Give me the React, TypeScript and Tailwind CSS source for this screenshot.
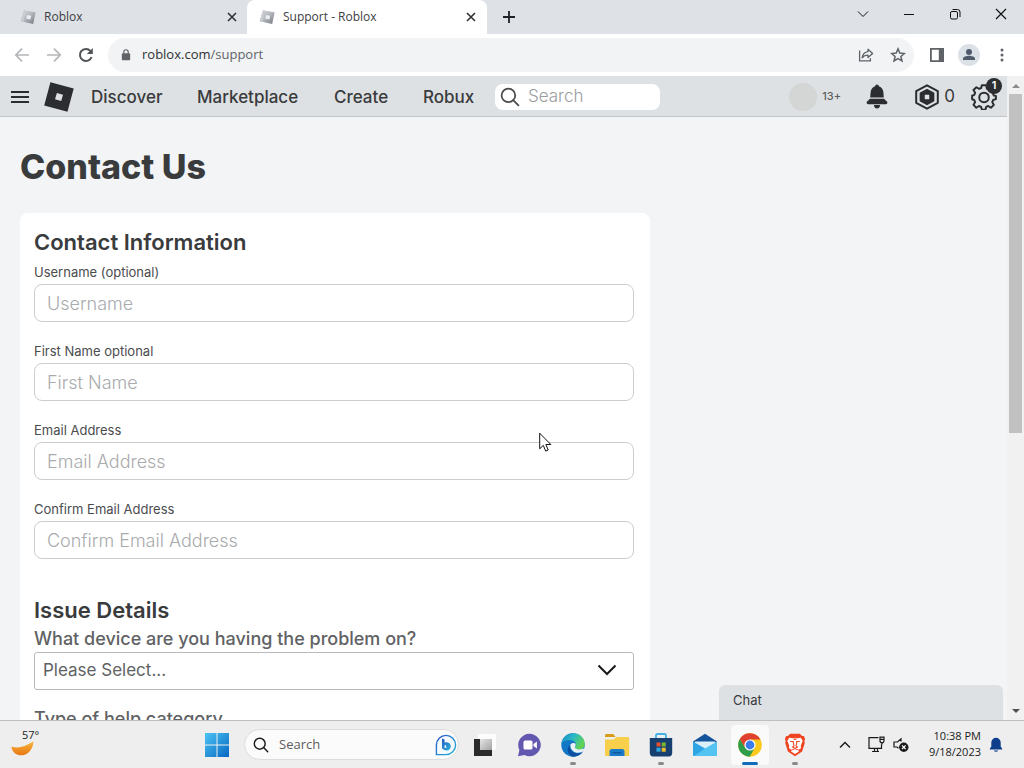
import React, { useState } from 'react';

interface IconProps {
  className?: string;
}

interface BrowserTab {
  title: string;
  active: boolean;
}

interface ContactField {
  id: string;
  label: string;
  placeholder: string;
  type: string;
}

const TABS: BrowserTab[] = [
  { title: 'Roblox', active: false },
  { title: 'Support - Roblox', active: true },
];

const FIELDS: ContactField[] = [
  { id: 'username', label: 'Username (optional)', placeholder: 'Username', type: 'text' },
  { id: 'first-name', label: 'First Name optional', placeholder: 'First Name', type: 'text' },
  { id: 'email', label: 'Email Address', placeholder: 'Email Address', type: 'email' },
  { id: 'confirm-email', label: 'Confirm Email Address', placeholder: 'Confirm Email Address', type: 'email' },
];

/* ---------- Browser icons ---------- */

const FaviconIcon: React.FC<IconProps> = ({ className }) => (
  <svg className={className} viewBox="0 0 16 16" aria-hidden="true">
    <defs>
      <linearGradient id="favicon" x1="0" y1="0" x2="1" y2="1">
        <stop offset="0" stopColor="#d9dbdf" />
        <stop offset="0.5" stopColor="#b3b6bd" />
        <stop offset="1" stopColor="#74777f" />
      </linearGradient>
    </defs>
    <path d="M4 1.2 15.6 3.2 13.2 15 .6 12.2Z" fill="url(#favicon)" />
    <path d="M4 1.2.6 12.2 3.4 12.8 6 1.6Z" fill="#c9ccd2" />
    <path d="M7.2 6 11.2 6.8 10.3 10.4 6.2 9.6Z" fill="#eceef1" />
  </svg>
);

const CloseIcon: React.FC<IconProps> = ({ className }) => (
  <svg className={className} viewBox="0 0 12 12" fill="none" stroke="currentColor" strokeWidth="1.6" aria-hidden="true">
    <path d="m2 2 8 8M10 2l-8 8" />
  </svg>
);

const ArrowIcon: React.FC<IconProps> = ({ className }) => (
  <svg className={className} viewBox="0 0 16 16" fill="none" stroke="currentColor" strokeWidth="1.7" aria-hidden="true">
    <path d="M15 8H2M8 1.6 1.8 8 8 14.4" />
  </svg>
);

const ReloadIcon: React.FC<IconProps> = ({ className }) => (
  <svg className={className} viewBox="0 0 16 16" aria-hidden="true">
    <path d="M13.6 10A6 6 0 1 1 12.4 3.9" fill="none" stroke="currentColor" strokeWidth="2" />
    <path d="M14.8 1v6H8.8Z" fill="currentColor" />
  </svg>
);

const LockIcon: React.FC<IconProps> = ({ className }) => (
  <svg className={className} viewBox="0 0 10 13" aria-hidden="true">
    <rect x="0.5" y="4.6" width="9" height="7.6" rx="1" fill="currentColor" />
    <path d="M2.6 5V3.2a2.4 2.4 0 0 1 4.8 0V5" fill="none" stroke="currentColor" strokeWidth="1.3" />
  </svg>
);

const ShareIcon: React.FC<IconProps> = ({ className }) => (
  <svg className={className} viewBox="0 0 16 16" fill="none" stroke="currentColor" strokeWidth="1.3" aria-hidden="true">
    <path d="M1.6 3.6v10.2h10.8v-2.6" />
    <path d="M10 2.2 14.6 6.4 10 10.6V8.2C7.4 8.2 5.6 9 4.2 10.8 4.6 7.6 6.4 5 10 4.6Z" strokeLinejoin="round" />
  </svg>
);

const StarIcon: React.FC<IconProps> = ({ className }) => (
  <svg className={className} viewBox="0 0 16 16" fill="none" stroke="currentColor" strokeWidth="1.5" aria-hidden="true">
    <path d="m8 1.9 1.8 4.2 4.6.4-3.5 3 1.1 4.5L8 11.6 4 14l1.1-4.5-3.5-3 4.6-.4Z" />
  </svg>
);

const SidePanelIcon: React.FC<IconProps> = ({ className }) => (
  <svg className={className} viewBox="0 0 14 14" aria-hidden="true">
    <path fill="currentColor" fillRule="evenodd" d="M0 0h14v14H0ZM1.8 1.8v10.4h7V1.8Z" />
  </svg>
);

const ProfileIcon: React.FC<IconProps> = ({ className }) => (
  <svg className={className} viewBox="0 0 22 22" aria-hidden="true">
    <circle cx="11" cy="11" r="11" fill="#dce0e7" />
    <circle cx="11" cy="8" r="3" fill="#4f5b6b" />
    <path d="M5 16v-1.4c0-2 3.6-2.9 6-2.9s6 .9 6 2.9V16Z" fill="#4f5b6b" />
  </svg>
);

/* ---------- Site icons ---------- */

const RobloxLogo: React.FC<IconProps> = ({ className }) => (
  <svg className={className} viewBox="0 0 30 30" aria-hidden="true">
    <path fill="#2b2d30" fillRule="evenodd" d="M6.4.2 29.7 6.4 23.5 29.8.2 23.5ZM12.9 10.9 11 17.3 17.2 19 19 12.7Z" />
  </svg>
);

const SearchIcon: React.FC<IconProps> = ({ className }) => (
  <svg className={className} viewBox="0 0 20 20" fill="none" stroke="currentColor" strokeWidth="1.8" aria-hidden="true">
    <circle cx="8.4" cy="8.4" r="6.8" />
    <path d="m13.2 13.2 5.2 5.2" strokeLinecap="round" />
  </svg>
);

const BellIcon: React.FC<IconProps> = ({ className }) => (
  <svg className={className} viewBox="0 0 22 25" fill="#2b2d30" aria-hidden="true">
    <path d="M11 .5a1.9 1.9 0 0 1 1.9 1.7c2.9.9 4.4 3.4 4.5 6.4l.4 5H4.2l.4-5c.1-3 1.6-5.5 4.500-6.400A1.900 1.900 0 0 1 11 .5Z" />
    <path d="M3.800 14.800h14.400c.6 1.600 3.200 2.300 3.200 3.800 0 .9-.7 1.600-1.600 1.600H2.200c-.9 0-1.600-.7-1.600-1.600 0-1.500 2.600-2.200 3.200-3.800Z" />
    <path d="M8 21h6a3 3.400 0 0 1-6 0Z" />
  </svg>
);

const RobuxIcon: React.FC<IconProps> = ({ className }) => (
  <svg className={className} viewBox="0 0 26 26" aria-hidden="true">
    <path d="M13 1.300 23.800 7.200v11.600L13 24.700 2.200 18.800V7.200Z" fill="none" stroke="#2b2d30" strokeWidth="2" strokeLinejoin="round" />
    <path fill="#2b2d30" stroke="#2b2d30" strokeWidth="1.500" strokeLinejoin="round" fillRule="evenodd" d="M13 5.600 19.600 9.200v7.600L13 20.400 6.400 16.800V9.200ZM10 10v6h6v-6Z" />
  </svg>
);

const GearIcon: React.FC<IconProps> = ({ className }) => (
  <svg className={className} viewBox="0 0 24 24" fill="none" stroke="#2b2d30" strokeWidth="1.800" strokeLinejoin="round" aria-hidden="true">
    <path d="M10 1.200h4l.6 3 1.900.8 2.600-1.700 2.800 2.800-1.700 2.500.8 2 2 .4v3l-2.600.8-.8 1.900 1.500 2.600-2.700 2.600-2.500-1.600-1.900.8-.7 2.700h-3.200l-.8-2.700-1.900-.8-2.500 1.600-2.600-2.600 1.500-2.600-.8-1.900-2-.7v-3.400l2-.6.8-2-1.500-2.500 2.700-2.600 2.500 1.500 1.900-.8Z" />
    <circle cx="12" cy="12.400" r="4.400" />
  </svg>
);

const CursorIcon: React.FC<IconProps> = ({ className }) => (
  <svg className={className} viewBox="0 0 13 20" aria-hidden="true">
    <path d="M.7 1.200v15.600l3.600-3.400 2.400 5.700 2.500-1.100-2.300-5.500h4.900Z" fill="#fff" stroke="#111" strokeWidth="1" />
  </svg>
);

/* ---------- Taskbar icons ---------- */

const WeatherIcon: React.FC<IconProps> = ({ className }) => (
  <svg className={className} viewBox="0 0 24 15" aria-hidden="true">
    <defs>
      <linearGradient id="moon" x1="0" y1="0" x2="0" y2="1">
        <stop offset="0" stopColor="#f8b63c" />
        <stop offset="1" stopColor="#e87512" />
      </linearGradient>
    </defs>
    <path d="M.4 5.500C7 8 13 6 22.500.6 22 8.500 17 14.300 10.500 14.300 5 14.300 1 11 .4 5.500Z" fill="url(#moon)" />
  </svg>
);

const WindowsIcon: React.FC<IconProps> = ({ className }) => (
  <svg className={className} viewBox="0 0 24 24" aria-hidden="true">
    <defs>
      <linearGradient id="windows" x1="0" y1="0" x2="24" y2="24" gradientUnits="userSpaceOnUse">
        <stop offset="0" stopColor="#4cc4f5" />
        <stop offset="1" stopColor="#0667c1" />
      </linearGradient>
    </defs>
    <path d="M0 0h11.500v11.500H0ZM12.500 0H24v11.500H12.500ZM0 12.500h11.500V24H0ZM12.500 12.500H24V24H12.500Z" fill="url(#windows)" />
  </svg>
);

const BingIcon: React.FC<IconProps> = ({ className }) => (
  <svg className={className} viewBox="0 0 22 22" aria-hidden="true">
    <defs>
      <linearGradient id="bing" x1="0" y1="0" x2="1" y2="1">
        <stop offset="0" stopColor="#2558c9" />
        <stop offset="1" stopColor="#29b3d8" />
      </linearGradient>
    </defs>
    <path d="M1.400 20.600V11A9.600 9.600 0 1 1 11 20.600Z" fill="#f4fafd" stroke="url(#bing)" strokeWidth="1.400" />
    <path d="M7 4.500 9.600 5.400v3.200l2.400-.4c2.200.2 3.800 1.800 3.800 4 0 2.400-1.800 4.200-4 4.200L9.400 16 7 14.600ZM9.600 11v3.200l2.600-1.200-1.200-.6-.6-1.600Z" fill="url(#bing)" />
  </svg>
);

const TaskViewIcon: React.FC<IconProps> = ({ className }) => (
  <svg className={className} viewBox="0 0 24 24" aria-hidden="true">
    <defs>
      <linearGradient id="task-view" x1="0" y1="0" x2="1" y2="1">
        <stop offset="0" stopColor="#e6e6e6" />
        <stop offset="1" stopColor="#a2a2a2" />
      </linearGradient>
    </defs>
    <rect x="5" y="1" width="18" height="16" rx="1.500" fill="#fcfcfc" />
    <path d="M1 6h18v17H1Z" fill="#2a2a2a" />
    <path d="M7 6h12v11H7Z" fill="url(#task-view)" />
  </svg>
);

const TeamsIcon: React.FC<IconProps> = ({ className }) => (
  <svg className={className} viewBox="0 0 24 24" aria-hidden="true">
    <path d="M12.500.8A11.200 11.200 0 1 1 7.500 22L1 23.200 2.400 17A11.200 11.200 0 0 1 12.500.8Z" fill="#6358b0" />
    <rect x="6.500" y="7.500" width="9" height="9" rx="1.500" fill="#fff" />
    <path d="m16.500 11 3.400-2.600v7.200L16.500 13Z" fill="#fff" />
  </svg>
);

const EdgeIcon: React.FC<IconProps> = ({ className }) => (
  <svg className={className} viewBox="0 0 24 24" aria-hidden="true">
    <defs>
      <linearGradient id="edge-top" x1="0" y1="0" x2="1" y2="0.500">
        <stop offset="0" stopColor="#1687c9" />
        <stop offset="0.500" stopColor="#2bb8c5" />
        <stop offset="1" stopColor="#63d452" />
      </linearGradient>
    </defs>
    <circle cx="12" cy="12" r="11.700" fill="#1377c8" />
    <path d="M.4 11C1 5 6 .3 12 .3c7 0 11.700 5 11.700 10.400 0 4-3 6-6.200 6-3 0-4.300-1.400-3.600-2.600.5-.7 1-1.400 1-2.700C14.900 8.500 11.500 7 8.400 7 4.800 7 1.800 8.600.4 11Z" fill="url(#edge-top)" />
    <path d="M9 11.800c-1 4.700 3 9 8 8.600 2.200-.2 3.800-1 5-1.900C20 21.700 16.500 23.700 12 23.700c-5-1-7.500-8.500-3-11.900Z" fill="#0d4f9e" />
    <path d="M9.500 11.500c1-1.400 3.500-2 5-.8.800 1.600-.9 3-.6 3.900.5 1.800 4.500 2.800 8.400.8l1 .3c-.5 2-1.200 2.600-2.300 3.400-5.500 2.400-12.500-1.200-11.500-7.600Z" fill="#e8f2f6" />
  </svg>
);

const FolderIcon: React.FC<IconProps> = ({ className }) => (
  <svg className={className} viewBox="0 0 26 24" aria-hidden="true">
    <path d="M1 2.500C1 1.700 1.600 1 2.500 1h6.800l2.300 3H1Z" fill="#d99a17" />
    <path d="M1 6.500h8.500L12.500 4H24c.7 0 1.200.5 1.200 1.200V22c0 .6-.5 1-1 1H2c-.6 0-1-.4-1-1Z" fill="#f8cf4a" />
    <path d="M5.500 23v-4.500c0-1.700 1-2.500 2.500-2.500h10c1.500 0 2.500.8 2.500 2.500V23Z" fill="#1a7bcb" />
    <path d="M8.500 19h9v1.500h-9Z" fill="#10589e" />
  </svg>
);

const StoreIcon: React.FC<IconProps> = ({ className }) => (
  <svg className={className} viewBox="0 0 24 24" aria-hidden="true">
    <path d="M7 6V2.500C7 1.700 7.600 1 8.500 1h7c.9 0 1.500.7 1.500 1.500V6" fill="none" stroke="#42b1e6" strokeWidth="1.800" />
    <path d="M.8 5h22.400v15c0 2-1.200 3.400-3.200 3.400H4C2 23.400.8 22 .8 20Z" fill="#173f70" />
    <path d="M7.500 9.500h4v4h-4Z" fill="#e8502c" />
    <path d="M12.700 9.500h4v4h-4Z" fill="#7cb82f" />
    <path d="M7.500 14.700h4v4h-4Z" fill="#31a8e0" />
    <path d="M12.700 14.700h4v4h-4Z" fill="#f5bc2d" />
  </svg>
);

const MailIcon: React.FC<IconProps> = ({ className }) => (
  <svg className={className} viewBox="0 0 26 24" aria-hidden="true">
    <path d="M1 8.500 13 .8l12 7.700-12 8Z" fill="#15549a" />
    <path d="M3 8.500h20v5L13 19 3 13.500Z" fill="#d9effa" />
    <path d="M1 8.500V22c0 .6.4 1 1 1h22L13 15.500Z" fill="#2fa4e3" />
    <path d="M25 8.500V22c0 .6-.4 1-1 1H2l11-7.500Z" fill="#53c3f1" />
  </svg>
);

const ChromeIcon: React.FC<IconProps> = ({ className }) => (
  <svg className={className} viewBox="0 0 24 24" aria-hidden="true">
    <circle cx="12" cy="12" r="11.800" fill="#fbc91c" />
    <path d="M1.800 6 7.200 14.800 12 17l4.800-2.200-5.100 9A11.800 11.800 0 0 1 1.800 6Z" fill="#2f9e4b" />
    <path d="M12 6.400h10.400A11.800 11.800 0 0 0 1.800 6l5.400 8.800L12 12Z" fill="#e0402f" />
    <circle cx="12" cy="12" r="5.600" fill="#fff" />
    <circle cx="12" cy="12" r="4.400" fill="#3b7de8" />
  </svg>
);

const BraveIcon: React.FC<IconProps> = ({ className }) => (
  <svg className={className} viewBox="0 0 22 25" aria-hidden="true">
    <path d="M6 .8h10l2.400 2.400 1.800-.2 1.300 3.200-.8 2.300.5 2-2.800 8.800L11 24.300 3.600 19.300.8 10.500l.5-2L.5 6.200 1.800 3l1.800.2Z" fill="#ee4422" />
    <path d="m5 5 3.500.5L11 5l2.500.5L17 5l2 3.200-2 5 .3 2.600-3.300 1.800 1.400 1.400L11 21.800 6.600 19 8 17.600l-3.300-1.800.3-2.600-2-5Z" fill="#fff" />
    <path d="M6 8.800h3.200v1.400l.8 3.200-1.600 1.200 2.600 1.600 2.600-1.600-1.600-1.200.8-3.200V8.800H16M9.400 6l1.600.6 1.600-.6M8 17.600l3-1.400 3 1.400" fill="none" stroke="#ee4422" strokeWidth="1.100" />
  </svg>
);

const NetworkIcon: React.FC<IconProps> = ({ className }) => (
  <svg className={className} viewBox="0 0 17 17" fill="none" stroke="currentColor" strokeWidth="1.200" aria-hidden="true">
    <path d="M10.500 1.600H1v10.800h12.500V8.500M4 15.500h7M6.500 12.500v3M9.500 12.500v3M14 6.500v2" />
    <path d="M12 1.200h4v3.600a2 2 0 0 1-4 0ZM12 3.400h4" />
  </svg>
);

const MutedIcon: React.FC<IconProps> = ({ className }) => (
  <svg className={className} viewBox="0 0 16 16" aria-hidden="true">
    <path d="M8 4.500V1.800L4.500 5H1v5h3l1.500 1.300" fill="none" stroke="currentColor" strokeWidth="1.200" />
    <circle cx="10.800" cy="10.200" r="4.700" fill="currentColor" />
    <path d="m9 8.400 3.600 3.600M12.600 8.400 9 12" stroke="#fff" strokeWidth="1.200" />
  </svg>
);

const TrayBellIcon: React.FC<IconProps> = ({ className }) => (
  <svg className={className} viewBox="0 0 14 16" fill="#0f3f8c" aria-hidden="true">
    <path d="M7 .8a4.700 4.700 0 0 1 4.700 4.700v4l1.500 2.300v.8H.8v-.8l1.500-2.300v-4A4.700 4.700 0 0 1 7 .8ZM4.800 13.400h4.400a2.300 2 0 0 1-4.400 0Z" />
  </svg>
);

const TASKBAR_APPS = [
  { name: 'Task view', Icon: TaskViewIcon, running: false, active: false },
  { name: 'Microsoft Teams', Icon: TeamsIcon, running: false, active: false },
  { name: 'Microsoft Edge', Icon: EdgeIcon, running: true, active: false },
  { name: 'File Explorer', Icon: FolderIcon, running: false, active: false },
  { name: 'Microsoft Store', Icon: StoreIcon, running: true, active: false },
  { name: 'Mail', Icon: MailIcon, running: false, active: false },
  { name: 'Google Chrome', Icon: ChromeIcon, running: true, active: true },
  { name: 'Brave', Icon: BraveIcon, running: true, active: false },
];

/**
 * Tab strip with the window controls
 */
const TabStrip: React.FC = () => (
  <div className="flex h-[34px] shrink-0 bg-[#dee1e6] text-[#3c4043]">
    {TABS.map((tab) => (
      <div
        key={tab.title}
        className={
          tab.active
            ? 'flex w-60 items-center rounded-t-lg bg-white pr-2 pl-3'
            : 'flex w-[247px] items-center pr-[7px] pl-5'
        }
      >
        <FaviconIcon className="h-4 w-4" />
        <span className="ml-2 flex-1 truncate text-xs">{tab.title}</span>
        <button type="button" aria-label={`Close ${tab.title}`} className="flex h-4 w-4 items-center justify-center text-[#303134]">
          <CloseIcon className="h-3 w-3" />
        </button>
      </div>
    ))}
    <button type="button" aria-label="New tab" className="flex w-11 items-center justify-center text-[#202124]">
      <svg className="h-3 w-3" viewBox="0 0 12 12" stroke="currentColor" strokeWidth="1.800" aria-hidden="true">
        <path d="M6 0v12M0 6h12" />
      </svg>
    </button>
    <div className="ml-auto flex h-7 text-[#111]">
      <button type="button" aria-label="Search tabs" className="flex w-[46px] items-center justify-center">
        <svg className="h-3 w-3" viewBox="0 0 12 12" fill="none" stroke="currentColor" aria-hidden="true">
          <path d="m1 3.500 5 5 5-5" />
        </svg>
      </button>
      <button type="button" aria-label="Minimize" className="flex w-[46px] items-center justify-center">
        <svg className="h-3 w-3" viewBox="0 0 12 12" stroke="currentColor" aria-hidden="true">
          <path d="M1 6.500h10" />
        </svg>
      </button>
      <button type="button" aria-label="Restore" className="flex w-[46px] items-center justify-center">
        <svg className="h-3 w-3" viewBox="0 0 12 12" fill="none" stroke="currentColor" aria-hidden="true">
          <rect x="1.500" y="3.500" width="7" height="7.500" rx="1.500" />
          <path d="M3.500 1.500h5a2.500 2.500 0 0 1 2.500 2.500v5" />
        </svg>
      </button>
      <button type="button" aria-label="Close window" className="flex w-[46px] items-center justify-center">
        <svg className="h-3 w-3" viewBox="0 0 12 12" stroke="currentColor" strokeWidth="1.200" aria-hidden="true">
          <path d="m1 1 10 10M11 1 1 11" />
        </svg>
      </button>
    </div>
  </div>
);

/**
 * Back / forward / reload row with the address field
 */
const AddressBar: React.FC = () => (
  <div className="flex h-[42px] shrink-0 items-center bg-white pr-3.5 pl-2 text-[#5f6368]">
    <button type="button" aria-label="Back" className="flex w-7 justify-center text-[#b4b6b9]">
      <ArrowIcon className="h-4 w-4" />
    </button>
    <button type="button" aria-label="Forward" className="ml-1 flex w-7 justify-center text-[#b4b6b9]">
      <ArrowIcon className="h-4 w-4 rotate-180" />
    </button>
    <button type="button" aria-label="Reload" className="ml-1 flex w-7 justify-center text-[#505356]">
      <ReloadIcon className="h-4 w-4" />
    </button>
    <div className="ml-2 flex h-[34px] flex-1 items-center rounded-full bg-[#f1f3f4] pr-2 pl-3">
      <LockIcon className="h-3 w-3" />
      <a href="#support" className="ml-2.5 text-[13px]">
        <span className="text-[#303134]">roblox.com</span>/support
      </a>
      <button type="button" aria-label="Share this page" className="ml-auto">
        <ShareIcon className="h-4 w-4" />
      </button>
      <button type="button" aria-label="Bookmark this tab" className="ml-4">
        <StarIcon className="h-4 w-4" />
      </button>
    </div>
    <button type="button" aria-label="Side panel" className="ml-4">
      <SidePanelIcon className="h-3.5 w-3.5" />
    </button>
    <button type="button" aria-label="Profile" className="ml-3.5">
      <ProfileIcon className="h-[22px] w-[22px]" />
    </button>
    <button type="button" aria-label="Menu" className="ml-3.5">
      <svg className="h-4 w-4" viewBox="0 0 16 16" fill="currentColor" aria-hidden="true">
        <circle cx="8" cy="3" r="1.500" />
        <circle cx="8" cy="8" r="1.500" />
        <circle cx="8" cy="13" r="1.500" />
      </svg>
    </button>
  </div>
);

/**
 * Roblox header
 */
const SiteHeader: React.FC = () => (
  <header className="flex h-[41px] shrink-0 items-center border-b border-[#c3c6c9] bg-[#dee1e3] pt-px pr-2.5 pl-[11px] font-[Inter,sans-serif] text-[#393b3d]">
    <button type="button" aria-label="Open navigation">
      <svg className="h-[18px] w-[18px]" viewBox="0 0 18 18" stroke="#2b2d30" strokeWidth="2" aria-hidden="true">
        <path d="M0 4h18M0 9h18M0 14h18" />
      </svg>
    </button>
    <a href="#home" aria-label="Roblox" className="ml-[15px]">
      <RobloxLogo className="h-[30px] w-[30px]" />
    </a>
    <nav className="ml-[17px] grid grid-cols-[106px_137px_89px_72px] pt-0.5 text-[17px] font-medium">
      <a href="#discover">Discover</a>
      <a href="#marketplace">Marketplace</a>
      <a href="#create">Create</a>
      <a href="#robux">Robux</a>
    </nav>
    <div className="flex h-[26px] w-[165px] items-center rounded-lg bg-white px-[5px]">
      <SearchIcon className="h-5 w-5 shrink-0 text-[#4a4c4e]" />
      <input
        type="search"
        aria-label="Search"
        placeholder="Search"
        className="ml-2 w-full min-w-0 bg-transparent text-[17px] font-light outline-none placeholder:text-[#9b9d9f]"
      />
    </div>
    <div className="ml-auto flex items-center">
      <span className="h-7 w-7 rounded-full bg-[#d4d6d6]" />
      <span className="ml-[5px] w-11 text-[11px] font-medium text-[#5d6063]">13+</span>
      <button type="button" aria-label="Notifications">
        <BellIcon className="h-[25px] w-[22px]" />
      </button>
      <button type="button" aria-label="0 Robux" className="ml-[26px] flex items-center gap-1 text-[17px]">
        <RobuxIcon className="h-[26px] w-[26px]" />
        0
      </button>
      <button type="button" aria-label="Settings, 1 notice" className="relative ml-4">
        <GearIcon className="h-[26px] w-[26px]" />
        <span className="absolute -top-1.5 left-[15px] flex h-4 w-4 items-center justify-center rounded-full bg-[#2b2d30] text-[11px] font-semibold text-white">
          1
        </span>
      </button>
    </div>
  </header>
);

/**
 * Support request form
 */
const ContactForm: React.FC = () => {
  const [device, setDevice] = useState('');

  return (
    <form className="mt-6 max-w-[630px] rounded-lg bg-white pt-[15px] pr-4 pb-10 pl-3.5">
      <h2 className="text-[22px] leading-7 font-semibold">Contact Information</h2>
      {FIELDS.map((field) => (
        <div key={field.id} className="mb-[13px] pt-[7px]">
          <label htmlFor={field.id} className="mb-[3px] block text-[13px] leading-[18px] text-[#4a4c4e]">
            {field.label}
          </label>
          <input
            id={field.id}
            type={field.type}
            placeholder={field.placeholder}
            className="block h-[38px] w-full rounded-lg border border-[#cbcdce] px-3 text-lg font-light outline-none placeholder:text-[#a9abad]"
          />
        </div>
      ))}
      <h2 className="mt-[37px] text-[22px] leading-7 font-semibold">Issue Details</h2>
      <label htmlFor="device" className="mt-1 mb-0.5 block text-lg leading-[22px] font-medium text-[#606264]">
        What device are you having the problem on?
      </label>
      <div className="relative">
        <select
          id="device"
          value={device}
          onChange={(e) => setDevice(e.target.value)}
          className="block h-[38px] w-full appearance-none rounded-[3px] border border-[#b8babb] bg-white px-2 text-[17px] text-[#606264] outline-none"
        >
          <option value="">Please Select...</option>
          <option value="pc">PC</option>
          <option value="mobile">Mobile</option>
        </select>
        <svg className="pointer-events-none absolute top-3 right-[17px] h-3 w-5" viewBox="0 0 20 12" fill="none" stroke="#191919" strokeWidth="2" aria-hidden="true">
          <path d="m1.500 1.500 8.500 8.500 8.500-8.500" />
        </svg>
      </div>
      <label htmlFor="category" className="mt-[18px] mb-0.5 block text-lg leading-[22px] font-medium text-[#606264]">
        Type of help category
      </label>
      <select id="category" className="block h-[38px] w-full appearance-none rounded-[3px] border border-[#b8babb] bg-white px-2 text-[17px] text-[#606264]">
        <option>Please Select...</option>
      </select>
    </form>
  );
};

const Scrollbar: React.FC = () => (
  <div className="flex w-[17px] shrink-0 flex-col items-center bg-[#f1f1f1]" aria-hidden="true">
    <svg className="h-[18px] w-4 shrink-0" viewBox="0 0 16 18">
      <path d="M4 12h8L8 8Z" fill="#8b8b8b" />
    </svg>
    <div className="h-[339px] w-[13px] bg-[#c1c1c1]" />
    <svg className="mt-auto h-[17px] w-4 shrink-0" viewBox="0 0 16 17">
      <path d="M4 6h8l-4 4Z" fill="#4f4f4f" />
    </svg>
  </div>
);

/**
 * Windows taskbar
 */
const Taskbar: React.FC = () => (
  <footer className="flex h-12 shrink-0 items-center border-t border-[#bfbfbf] bg-[#eeeeee] text-[#1b1b1b]">
    <div className="flex w-[195px] shrink-0 items-start pl-[11px]">
      <div className="flex flex-col pb-1">
        <span className="pl-[11px] text-[11px] leading-3">57°</span>
        <WeatherIcon className="h-[15px] w-6" />
      </div>
    </div>
    <button type="button" aria-label="Start" className="flex w-11 shrink-0 justify-center">
      <WindowsIcon className="h-6 w-6" />
    </button>
    <div className="ml-[5px] flex h-[31px] w-[215px] shrink-0 items-center rounded-full border border-[#dddddd] bg-[#fbfbfb] pl-2">
      <SearchIcon className="h-4 w-4 shrink-0" />
      <input
        type="search"
        aria-label="Search Windows"
        placeholder="Search"
        className="ml-2.5 w-full min-w-0 bg-transparent text-[13px] outline-none placeholder:text-[#5c5c5c]"
      />
      <BingIcon className="mr-px h-[22px] w-[22px] shrink-0" />
    </div>
    <div className="ml-1 flex">
      {TASKBAR_APPS.map(({ name, Icon, running, active }) => (
        <button
          key={name}
          type="button"
          aria-label={name}
          className={
            active
              ? 'relative mx-1 flex h-10 w-[38px] items-center justify-center rounded bg-[#fafafa]'
              : 'relative flex h-10 w-11 items-center justify-center'
          }
        >
          <Icon className="h-6 w-[26px]" />
          {running && (
            <span
              className={
                active
                  ? 'absolute bottom-0 h-[3px] w-4 rounded-full bg-[#0f6cbd]'
                  : 'absolute bottom-0 h-[3px] w-1.5 rounded-full bg-[#8a8a8a]'
              }
            />
          )}
        </button>
      ))}
    </div>
    <div className="ml-auto flex items-center pr-[21px]">
      <button type="button" aria-label="Show hidden icons">
        <svg className="h-3 w-3" viewBox="0 0 12 12" fill="none" stroke="currentColor" strokeWidth="1.400" aria-hidden="true">
          <path d="m1 8.500 5-5 5 5" />
        </svg>
      </button>
      <button type="button" aria-label="Network" className="ml-[17px]">
        <NetworkIcon className="h-[17px] w-[17px]" />
      </button>
      <button type="button" aria-label="Sound muted" className="ml-2">
        <MutedIcon className="h-4 w-4" />
      </button>
      <button type="button" className="ml-2 w-16 shrink-0 pb-px text-right text-[11px] leading-4 whitespace-nowrap">
        10:38 PM
        <br />
        9/18/2023
      </button>
      <button type="button" aria-label="Notification center" className="ml-2">
        <TrayBellIcon className="h-4 w-3.5" />
      </button>
    </div>
  </footer>
);

const App: React.FC = () => {
  return (
    <div className="relative flex h-screen flex-col overflow-hidden font-['Open_Sans',sans-serif]">
      <TabStrip />
      <AddressBar />
      <div className="flex min-h-0 flex-1">
        <div className="relative flex min-w-0 flex-1 flex-col">
          <SiteHeader />
          <main className="min-h-0 flex-1 overflow-hidden bg-[#f2f4f5] px-5 pt-7 font-[Inter,sans-serif] text-[#393b3d]">
            <h1 className="text-[34px] leading-[44px] font-extrabold">Contact Us</h1>
            <ContactForm />
          </main>
          <button
            type="button"
            className="absolute right-1 bottom-0 h-[35px] w-[284px] rounded-t-md bg-[#dee1e3] px-3.5 pb-1 text-left font-[Inter,sans-serif] text-[13px] text-[#393b3d]"
          >
            Chat
          </button>
        </div>
        <Scrollbar />
      </div>
      <Taskbar />
      <CursorIcon className="pointer-events-none absolute top-[432px] left-[539px] h-5 w-[13px]" />
    </div>
  );
};

export default App;
